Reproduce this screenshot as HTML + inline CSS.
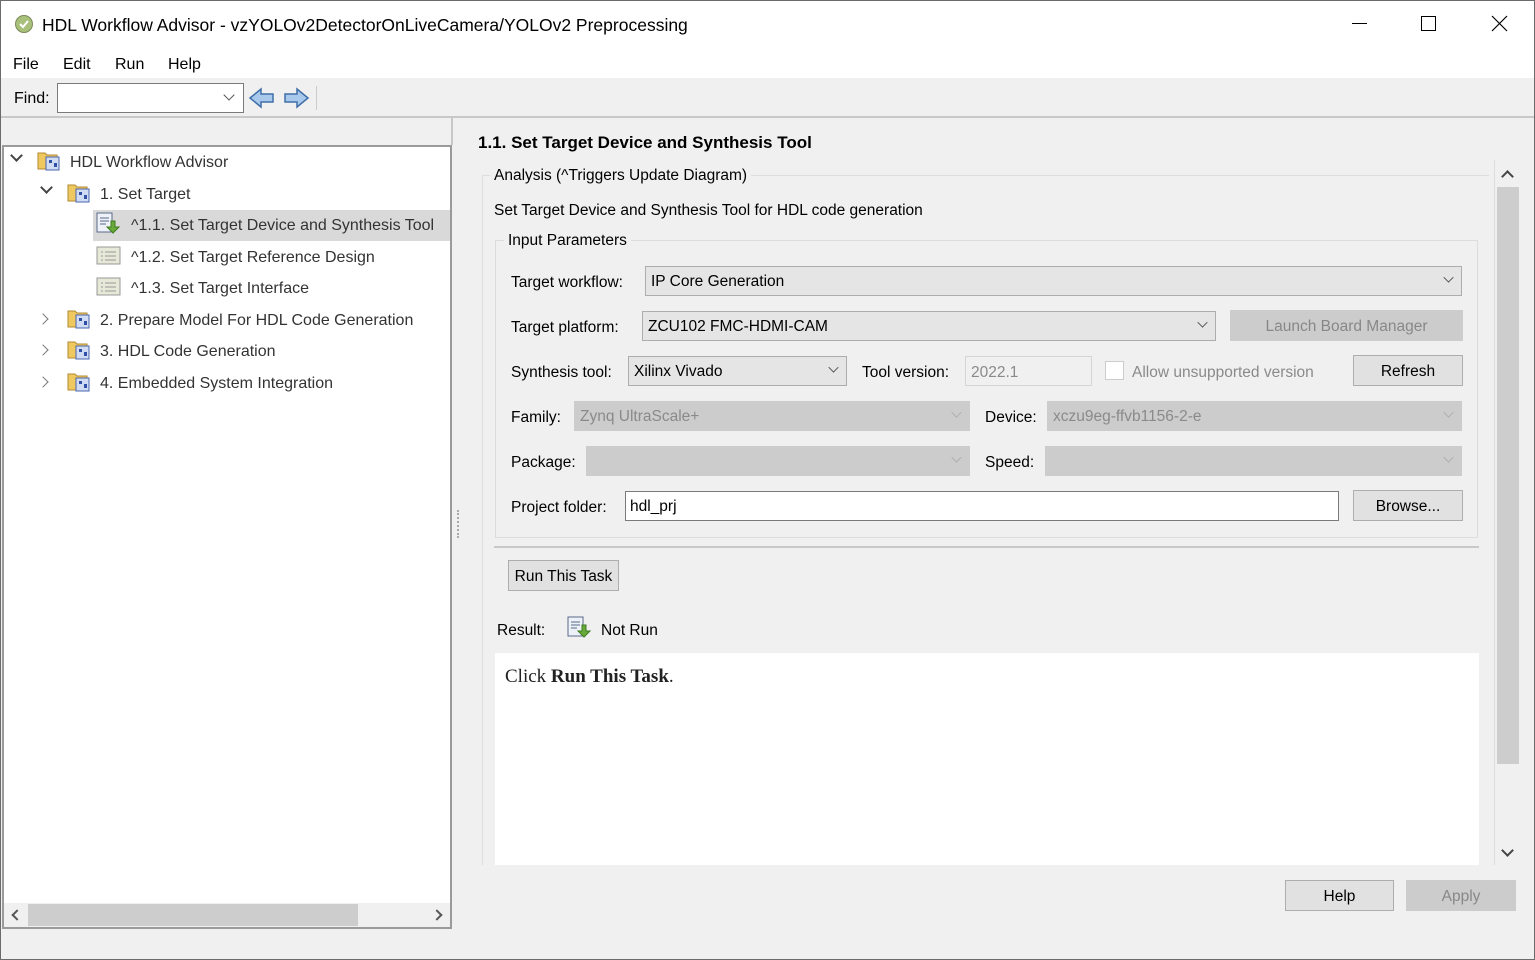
<!DOCTYPE html>
<html><head><meta charset="utf-8">
<style>
*{box-sizing:border-box;margin:0;padding:0}
body{width:1535px;height:960px;overflow:hidden;background:#f0f0f0;font-family:"Liberation Sans",sans-serif;font-size:15.5px;color:#000;position:relative}
.a{position:absolute;white-space:nowrap}
.combo{position:absolute;border:1px solid #adadad;background:#e5e5e5;padding-left:5px;line-height:29px;height:30px}
.combo.dis{background:#ccc;border-color:#ccc;color:#8a8a8a}
.chev{position:absolute;right:8px;width:9px;height:9px;border-right:1.5px solid #444;border-bottom:1.5px solid #444;transform:rotate(45deg) scale(.8);top:6px}
.dis .chev{border-color:#aaa}
.btn{position:absolute;border:1px solid #adadad;background:#e1e1e1;text-align:center;line-height:31px;height:31px}
.btn.dis{background:#ccc;border-color:#ccc;color:#888}
.tree{font-size:16px;color:#333}
.fold{position:absolute;width:24px;height:22px}
</style></head><body>
<div class="a" style="left:0;top:0;width:1535px;height:960px;border:1px solid #6b6b6b;"></div>
<div class="a" style="left:1px;top:1px;width:1533px;height:46px;background:#fff"></div>
<svg class="a" style="left:14px;top:14px" width="20" height="20"><circle cx="10" cy="10" r="8.5" fill="#a8c07a" stroke="#7a8a5a"/><path d="M6 10l3 3 5-6" stroke="#fff" stroke-width="2" fill="none"/></svg>
<div class="a" style="left:42px;top:15px;font-size:17.5px">HDL Workflow Advisor - vzYOLOv2DetectorOnLiveCamera/YOLOv2 Preprocessing</div>
<div class="a" style="left:1352px;top:23px;width:15px;height:1px;background:#000"></div>
<div class="a" style="left:1421px;top:16px;width:15px;height:15px;border:1px solid #000"></div>
<svg class="a" style="left:1491px;top:15px" width="17" height="17"><path d="M1 1L16 16M16 1L1 16" stroke="#000" stroke-width="1.2"/></svg>
<div class="a" style="left:1px;top:47px;width:1533px;height:31px;background:#fff"></div>
<div class="a" style="left:13px;top:56px;font-size:16px">File</div>
<div class="a" style="left:63px;top:56px;font-size:16px">Edit</div>
<div class="a" style="left:115px;top:56px;font-size:16px">Run</div>
<div class="a" style="left:168px;top:56px;font-size:16px">Help</div>
<div class="a" style="left:14px;top:90px;font-size:16px">Find:</div>
<div class="a" style="left:57px;top:83px;width:187px;height:30px;background:#fff;border:1px solid #7a7a7a"></div>
<div class="a" style="left:225px;top:91px;width:8px;height:8px;border-right:1.5px solid #555;border-bottom:1.5px solid #555;transform:rotate(45deg)"></div>
<svg class="a" style="left:248px;top:86px" width="28" height="24"><path d="M2 12L13 3v5h12v8H13v5z" fill="#a9c9ec" stroke="#3f6fa8" stroke-width="1.5"/></svg>
<svg class="a" style="left:282px;top:86px" width="28" height="24"><path d="M26 12L15 3v5H3v8h12v5z" fill="#a9c9ec" stroke="#3f6fa8" stroke-width="1.5"/></svg>
<div class="a" style="left:316px;top:86px;width:1px;height:24px;background:#ccc"></div>
<div class="a" style="left:1px;top:116px;width:1533px;height:2px;background:#c8c8c8"></div>
<div class="a" style="left:2px;top:145px;width:450px;height:784px;border:2px solid #9a9a9a;background:#fff"></div>
<div class="a" style="left:451px;top:118px;width:2px;height:27px;background:#c8c8c8"></div>
<div class="a" style="left:93px;top:210px;width:357px;height:31px;background:#d9d9d9"></div>
<div class="tree">
<div class="a" style="left:12px;top:151px;width:9px;height:9px;border-right:2px solid #444;border-bottom:2px solid #444;transform:rotate(45deg)"></div>
<div class="a" style="left:42px;top:183px;width:9px;height:9px;border-right:2px solid #444;border-bottom:2px solid #444;transform:rotate(45deg)"></div>
<svg class="fold" style="left:37px;top:149px"><path d="M1 4h7l2 2h10v14H1z" fill="#f0c860" stroke="#b08a30"/><rect x="9" y="8" width="13" height="13" fill="#d0dcf4" stroke="#4a64b0"/><rect x="12" y="11" width="3" height="3" fill="#3050a8"/><rect x="17" y="14" width="3" height="4" fill="#3050a8"/></svg>
<div class="a" style="left:70px;top:154px">HDL Workflow Advisor</div>
<svg class="fold" style="left:67px;top:181px"><path d="M1 4h7l2 2h10v14H1z" fill="#f0c860" stroke="#b08a30"/><rect x="9" y="8" width="13" height="13" fill="#d0dcf4" stroke="#4a64b0"/><rect x="12" y="11" width="3" height="3" fill="#3050a8"/><rect x="17" y="14" width="3" height="4" fill="#3050a8"/></svg>
<div class="a" style="left:100px;top:186px">1. Set Target</div>
<svg class="a" style="left:96px;top:212px" width="26" height="24"><rect x="1" y="1" width="15" height="19" fill="#eef2f8" stroke="#5a6a8a"/><path d="M4 6h9M4 9h9M4 12h6" stroke="#5a6a8a"/><path d="M15 9v6h-4l6 6 6-6h-4V9z" fill="#6aaa3a" stroke="#3d7a1f"/></svg>
<div class="a" style="left:131px;top:217px">^1.1. Set Target Device and Synthesis Tool</div>
<svg class="a" style="left:96px;top:246px" width="26" height="20"><rect x="1" y="1" width="23" height="17" fill="#e6e8d8" stroke="#999"/><path d="M5 6h2M9 6h11M5 10h2M9 10h11M5 14h2M9 14h11" stroke="#999"/></svg>
<div class="a" style="left:131px;top:249px">^1.2. Set Target Reference Design</div>
<svg class="a" style="left:96px;top:277px" width="26" height="20"><rect x="1" y="1" width="23" height="17" fill="#e6e8d8" stroke="#999"/><path d="M5 6h2M9 6h11M5 10h2M9 10h11M5 14h2M9 14h11" stroke="#999"/></svg>
<div class="a" style="left:131px;top:280px">^1.3. Set Target Interface</div>
<div class="a" style="left:39px;top:315px;width:8px;height:8px;border-right:1.5px solid #777;border-bottom:1.5px solid #777;transform:rotate(-45deg)"></div>
<div class="a" style="left:39px;top:346px;width:8px;height:8px;border-right:1.5px solid #777;border-bottom:1.5px solid #777;transform:rotate(-45deg)"></div>
<div class="a" style="left:39px;top:378px;width:8px;height:8px;border-right:1.5px solid #777;border-bottom:1.5px solid #777;transform:rotate(-45deg)"></div>
<svg class="fold" style="left:67px;top:307px"><path d="M1 4h7l2 2h10v14H1z" fill="#f0c860" stroke="#b08a30"/><rect x="9" y="8" width="13" height="13" fill="#d0dcf4" stroke="#4a64b0"/><rect x="12" y="11" width="3" height="3" fill="#3050a8"/><rect x="17" y="14" width="3" height="4" fill="#3050a8"/></svg>
<div class="a" style="left:100px;top:312px">2. Prepare Model For HDL Code Generation</div>
<svg class="fold" style="left:67px;top:338px"><path d="M1 4h7l2 2h10v14H1z" fill="#f0c860" stroke="#b08a30"/><rect x="9" y="8" width="13" height="13" fill="#d0dcf4" stroke="#4a64b0"/><rect x="12" y="11" width="3" height="3" fill="#3050a8"/><rect x="17" y="14" width="3" height="4" fill="#3050a8"/></svg>
<div class="a" style="left:100px;top:343px">3. HDL Code Generation</div>
<svg class="fold" style="left:67px;top:370px"><path d="M1 4h7l2 2h10v14H1z" fill="#f0c860" stroke="#b08a30"/><rect x="9" y="8" width="13" height="13" fill="#d0dcf4" stroke="#4a64b0"/><rect x="12" y="11" width="3" height="3" fill="#3050a8"/><rect x="17" y="14" width="3" height="4" fill="#3050a8"/></svg>
<div class="a" style="left:100px;top:375px">4. Embedded System Integration</div>
</div>
<div class="a" style="left:4px;top:903px;width:446px;height:24px;background:#f0f0f0"></div>
<div class="a" style="left:28px;top:904px;width:330px;height:22px;background:#cdcdcd"></div>
<div class="a" style="left:13px;top:911px;width:8px;height:8px;border-left:2px solid #555;border-bottom:2px solid #555;transform:rotate(45deg)"></div>
<div class="a" style="left:433px;top:911px;width:8px;height:8px;border-right:2px solid #555;border-top:2px solid #555;transform:rotate(45deg)"></div>
<div class="a" style="left:457px;top:510px;width:2px;height:28px;border-left:2px dotted #aaa"></div>
<div class="a" style="left:478px;top:133px;font-size:17px;font-weight:bold">1.1. Set Target Device and Synthesis Tool</div>
<div class="a" style="left:482px;top:175px;width:1007px;height:690px;border-left:1px solid #ddd;border-top:1px solid #ddd"></div>
<div class="a" style="left:490px;top:167px;background:#f0f0f0;padding:0 4px">Analysis (^Triggers Update Diagram)</div>
<div class="a" style="left:494px;top:202px">Set Target Device and Synthesis Tool for HDL code generation</div>
<div class="a" style="left:495px;top:240px;width:983px;height:298px;border:1px solid #dcdcdc"></div>
<div class="a" style="left:504px;top:232px;background:#f0f0f0;padding:0 4px">Input Parameters</div>
<div class="a" style="left:511px;top:274px">Target workflow:</div>
<div class="combo" style="left:645px;top:266px;width:817px">IP Core Generation<div class="chev"></div></div>
<div class="a" style="left:511px;top:319px">Target platform:</div>
<div class="combo" style="left:642px;top:311px;width:574px">ZCU102 FMC-HDMI-CAM<div class="chev"></div></div>
<div class="btn dis" style="left:1230px;top:310px;width:233px">Launch Board Manager</div>
<div class="a" style="left:511px;top:364px">Synthesis tool:</div>
<div class="combo" style="left:628px;top:356px;width:219px">Xilinx Vivado<div class="chev"></div></div>
<div class="a" style="left:862px;top:364px">Tool version:</div>
<div class="a" style="left:965px;top:356px;width:127px;height:30px;border:1px solid #d5d5d5;background:#f0f0f0;color:#8a8a8a;padding-left:5px;line-height:31px">2022.1</div>
<div class="a" style="left:1105px;top:361px;width:19px;height:19px;border:1px solid #ccc;background:#fff"></div>
<div class="a" style="left:1132px;top:364px;color:#8a8a8a">Allow unsupported version</div>
<div class="btn" style="left:1353px;top:355px;width:110px">Refresh</div>
<div class="a" style="left:511px;top:409px">Family:</div>
<div class="combo dis" style="left:574px;top:401px;width:396px">Zynq UltraScale+<div class="chev"></div></div>
<div class="a" style="left:985px;top:409px">Device:</div>
<div class="combo dis" style="left:1047px;top:401px;width:415px">xczu9eg-ffvb1156-2-e<div class="chev"></div></div>
<div class="a" style="left:511px;top:454px">Package:</div>
<div class="combo dis" style="left:586px;top:446px;width:384px"><div class="chev"></div></div>
<div class="a" style="left:985px;top:454px">Speed:</div>
<div class="combo dis" style="left:1045px;top:446px;width:417px"><div class="chev"></div></div>
<div class="a" style="left:511px;top:499px">Project folder:</div>
<div class="a" style="left:625px;top:491px;width:714px;height:30px;border:1px solid #7a7a7a;background:#fff;padding-left:4px;line-height:30px">hdl_prj</div>
<div class="btn" style="left:1353px;top:490px;width:110px">Browse...</div>
<div class="a" style="left:494px;top:546px;width:985px;height:2px;background:#c8c8c8"></div>
<div class="btn" style="left:508px;top:560px;width:111px">Run This Task</div>
<div class="a" style="left:497px;top:622px">Result:</div>
<svg class="a" style="left:567px;top:616px" width="26" height="26"><rect x="1" y="1" width="15" height="19" fill="#eef2f8" stroke="#5a6a8a"/><path d="M4 6h9M4 9h9M4 12h6" stroke="#5a6a8a"/><path d="M15 9v6h-4l6 6 6-6h-4V9z" fill="#6aaa3a" stroke="#3d7a1f"/></svg>
<div class="a" style="left:601px;top:622px">Not Run</div>
<div class="a" style="left:495px;top:653px;width:984px;height:212px;background:#fff"></div>
<div class="a" style="left:505px;top:666px;font-family:'Liberation Serif',serif;font-size:19px;color:#222">Click <b>Run This Task</b>.</div>
<div class="a" style="left:1494px;top:160px;width:1px;height:705px;background:#ddd"></div>
<div class="a" style="left:1503px;top:172px;width:9px;height:9px;border-left:2px solid #444;border-top:2px solid #444;transform:rotate(45deg)"></div>
<div class="a" style="left:1497px;top:187px;width:22px;height:577px;background:#cdcdcd"></div>
<div class="a" style="left:1503px;top:846px;width:9px;height:9px;border-right:2px solid #444;border-bottom:2px solid #444;transform:rotate(45deg)"></div>
<div class="btn" style="left:1285px;top:880px;width:109px">Help</div>
<div class="btn dis" style="left:1406px;top:880px;width:110px">Apply</div>
</body></html>
